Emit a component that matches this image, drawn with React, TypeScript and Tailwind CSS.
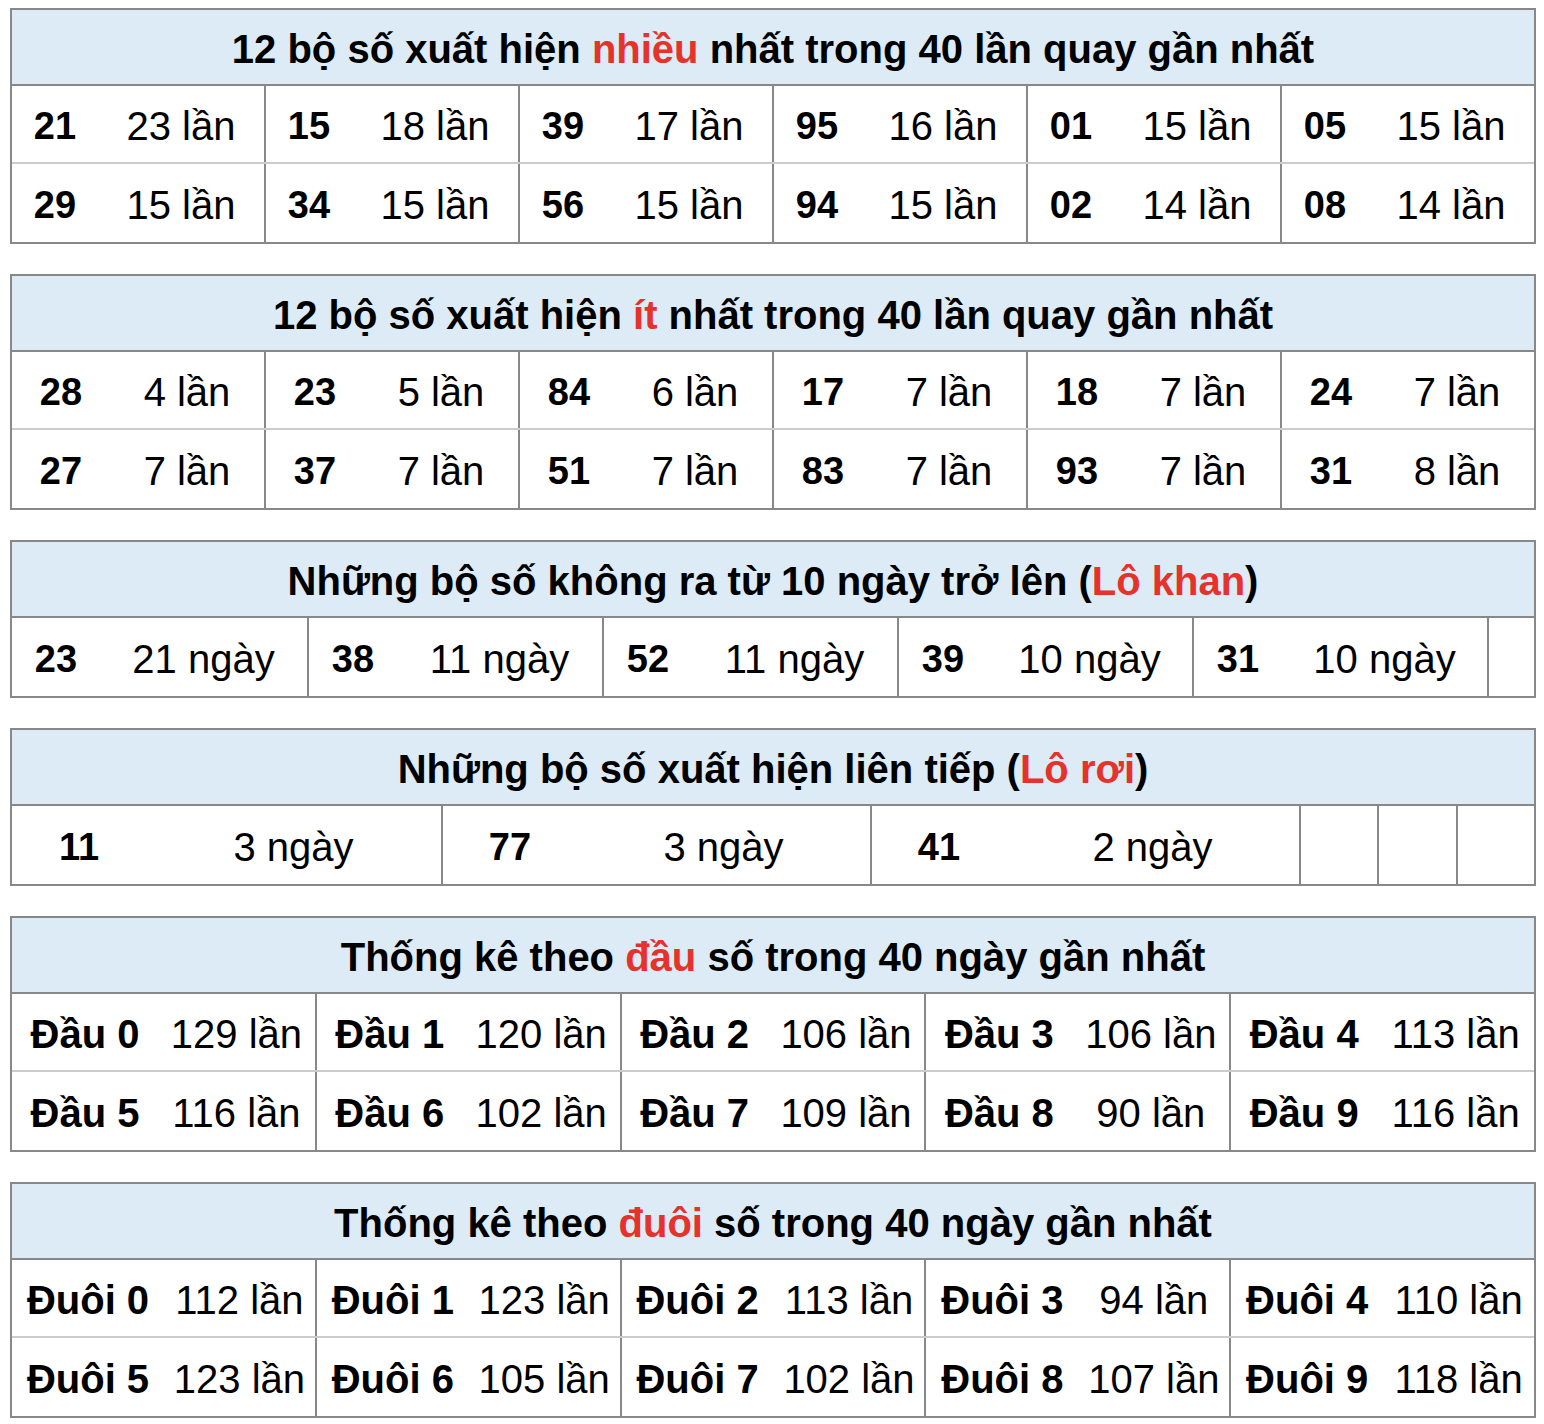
const RED = 'text-[#e5322b]';

type Pair = [string, string];

interface Section {
  title: React.ReactNode;
  rows: Pair[][];
  numWidth: string;
  numSize: string;
  groupWidth?: string;
  empties?: number;
}

function Group({
  pair,
  s,
  first,
}: {
  pair: Pair;
  s: Section;
  first: boolean;
}) {
  return (
    <div
      className={`flex items-center h-full pt-[4px] ${s.groupWidth ?? 'flex-1'} ${
        first ? '' : 'border-l-2 border-[#888]'
      }`}
    >
      <div className={`${s.numWidth} ${s.numSize} shrink-0 text-center font-bold`}>{pair[0]}</div>
      <div className="flex-1 text-center text-[40px]">{pair[1]}</div>
    </div>
  );
}

function StatTable({ s }: { s: Section }) {
  return (
    <div className="border-2 border-[#888] w-[1526px]">
      <div className="h-[76px] pt-[4px] bg-[#ddebf7] border-b-2 border-[#888] flex items-center justify-center font-bold text-[40px]">
        {s.title}
      </div>
      {s.rows.map((row, ri) => (
        <div
          key={ri}
          className={`h-[78px] flex ${ri < s.rows.length - 1 ? 'border-b-2 border-[#ccc]' : ''}`}
        >
          {row.map((p, i) => (
            <Group key={i} pair={p} s={s} first={i === 0} />
          ))}
          {Array.from({ length: s.empties ?? 0 }).map((_, i) => (
            <div key={'e' + i} className="h-full flex-1 border-l-2 border-[#888]" />
          ))}
        </div>
      ))}
    </div>
  );
}

const sections: Section[] = [
  {
    title: (
      <span>
        12 bộ số xuất hiện <span className={RED}>nhiều</span> nhất trong 40 lần quay gần nhất
      </span>
    ),
    numWidth: 'w-[86px]',
    numSize: 'text-[38px]',
    rows: [
      [
        ['21', '23 lần'],
        ['15', '18 lần'],
        ['39', '17 lần'],
        ['95', '16 lần'],
        ['01', '15 lần'],
        ['05', '15 lần'],
      ],
      [
        ['29', '15 lần'],
        ['34', '15 lần'],
        ['56', '15 lần'],
        ['94', '15 lần'],
        ['02', '14 lần'],
        ['08', '14 lần'],
      ],
    ],
  },
  {
    title: (
      <span>
        12 bộ số xuất hiện <span className={RED}>ít</span> nhất trong 40 lần quay gần nhất
      </span>
    ),
    numWidth: 'w-[98px]',
    numSize: 'text-[38px]',
    rows: [
      [
        ['28', '4 lần'],
        ['23', '5 lần'],
        ['84', '6 lần'],
        ['17', '7 lần'],
        ['18', '7 lần'],
        ['24', '7 lần'],
      ],
      [
        ['27', '7 lần'],
        ['37', '7 lần'],
        ['51', '7 lần'],
        ['83', '7 lần'],
        ['93', '7 lần'],
        ['31', '8 lần'],
      ],
    ],
  },
  {
    title: (
      <span>
        Những bộ số không ra từ 10 ngày trở lên (<span className={RED}>Lô khan</span>)
      </span>
    ),
    numWidth: 'w-[88px]',
    numSize: 'text-[38px]',
    groupWidth: 'w-[295px]',
    empties: 1,
    rows: [
      [
        ['23', '21 ngày'],
        ['38', '11 ngày'],
        ['52', '11 ngày'],
        ['39', '10 ngày'],
        ['31', '10 ngày'],
      ],
    ],
  },
  {
    title: (
      <span>
        Những bộ số xuất hiện liên tiếp (<span className={RED}>Lô rơi</span>)
      </span>
    ),
    numWidth: 'w-[134px]',
    numSize: 'text-[38px]',
    groupWidth: 'w-[429px]',
    empties: 3,
    rows: [
      [
        ['11', '3 ngày'],
        ['77', '3 ngày'],
        ['41', '2 ngày'],
      ],
    ],
  },
  {
    title: (
      <span>
        Thống kê theo <span className={RED}>đầu</span> số trong 40 ngày gần nhất
      </span>
    ),
    numWidth: 'w-[146px]',
    numSize: 'text-[40px]',
    rows: [
      [
        ['Đầu 0', '129 lần'],
        ['Đầu 1', '120 lần'],
        ['Đầu 2', '106 lần'],
        ['Đầu 3', '106 lần'],
        ['Đầu 4', '113 lần'],
      ],
      [
        ['Đầu 5', '116 lần'],
        ['Đầu 6', '102 lần'],
        ['Đầu 7', '109 lần'],
        ['Đầu 8', '90 lần'],
        ['Đầu 9', '116 lần'],
      ],
    ],
  },
  {
    title: (
      <span>
        Thống kê theo <span className={RED}>đuôi</span> số trong 40 ngày gần nhất
      </span>
    ),
    numWidth: 'w-[152px]',
    numSize: 'text-[40px]',
    rows: [
      [
        ['Đuôi 0', '112 lần'],
        ['Đuôi 1', '123 lần'],
        ['Đuôi 2', '113 lần'],
        ['Đuôi 3', '94 lần'],
        ['Đuôi 4', '110 lần'],
      ],
      [
        ['Đuôi 5', '123 lần'],
        ['Đuôi 6', '105 lần'],
        ['Đuôi 7', '102 lần'],
        ['Đuôi 8', '107 lần'],
        ['Đuôi 9', '118 lần'],
      ],
    ],
  },
];

export default function App() {
  return (
    <div className="min-h-screen bg-white pl-[10px] pt-[8px] pb-[10px] text-black font-['Liberation_Sans',Arial,sans-serif]">
      <div className="flex flex-col gap-[30px]">
        {sections.map((s, i) => (
          <StatTable key={i} s={s} />
        ))}
      </div>
    </div>
  );
}
